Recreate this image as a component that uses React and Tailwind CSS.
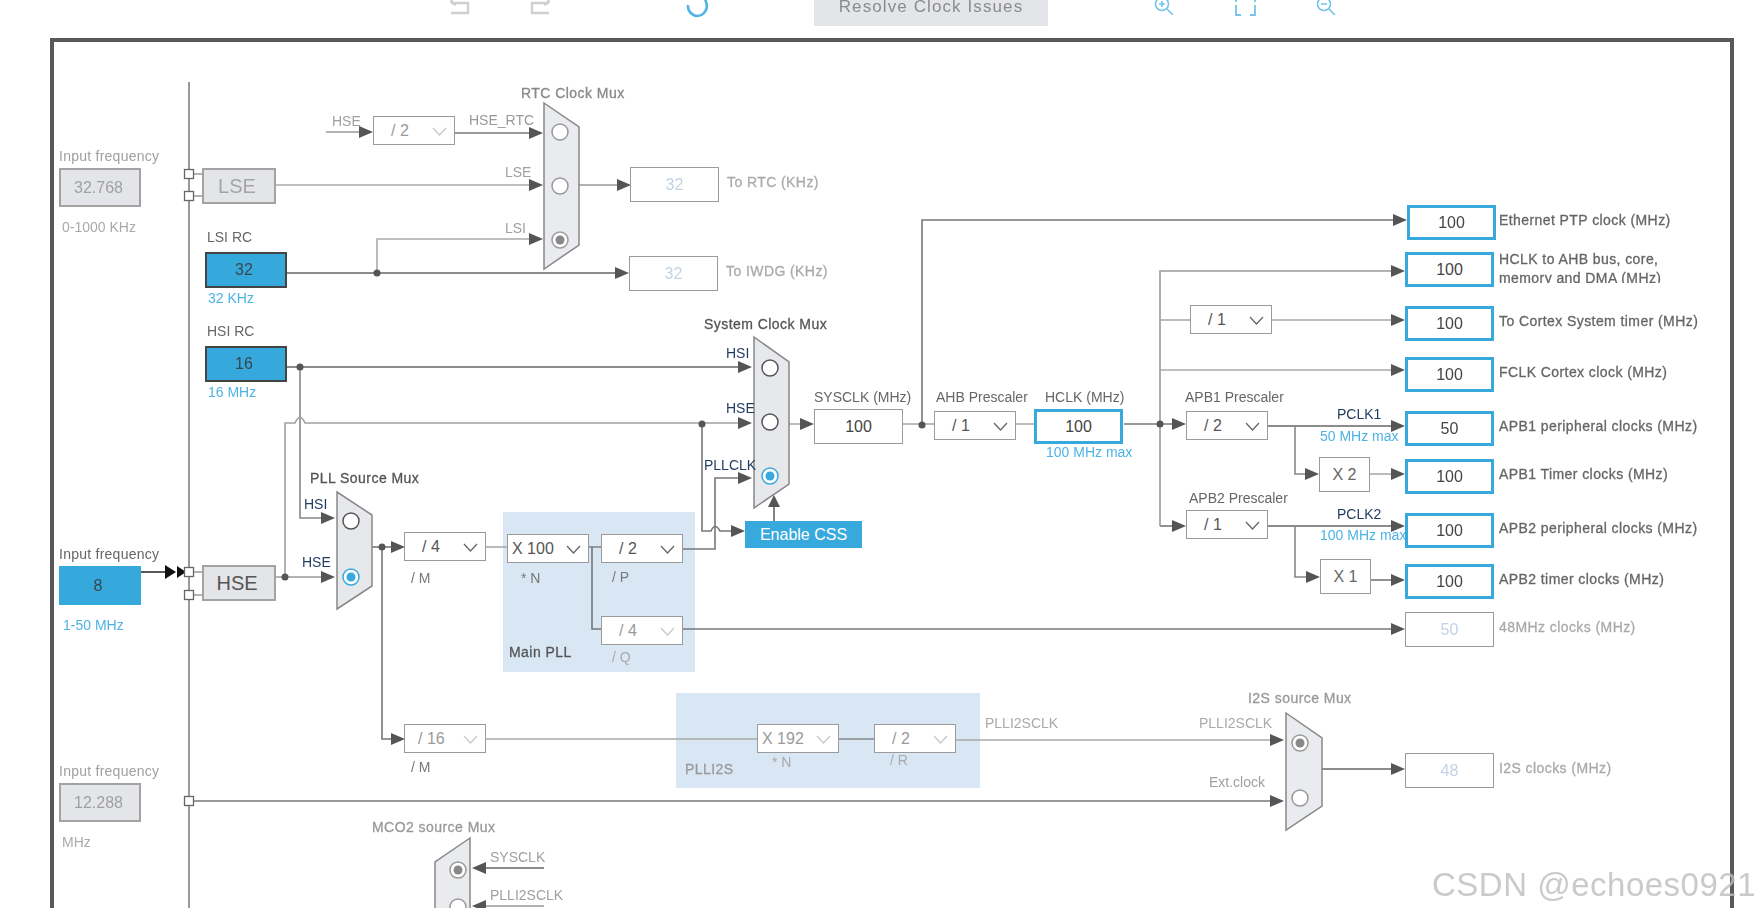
import React from "react";

const BLUE = "#38a9dd";

// wires: points in page coordinates, c = stroke colour
const wires = [
    { d: "M326 132 H362", c: "#999" },
    { d: "M455 133 H530", c: "#777" },
    { d: "M276 185 H530", c: "#aaa" },
    { d: "M287 273 H618", c: "#666" },
    { d: "M377 273 V239 H530", c: "#aaa" },
    { d: "M579 185 H620", c: "#999" },
    { d: "M287 367 H740", c: "#666" },
    { d: "M300 367 V518 H323", c: "#888" },
    { d: "M285 577 V423 H295 Q300 412 305 423 H740", c: "#a0a0a0" },
    { d: "M276 577 H323", c: "#999" },
    { d: "M702 424 V531 H711 Q715 522 720 531 H732", c: "#777" },
    { d: "M683 549 H715 V478 H740", c: "#777" },
    { d: "M774 521 V505", c: "#666" },
    { d: "M789 424 H802", c: "#aaa" },
    { d: "M903 424 H934", c: "#aaa" },
    { d: "M922 424 V220 H1394", c: "#777" },
    { d: "M1016 424 H1035", c: "#aaa" },
    { d: "M1124 424 H1174", c: "#777" },
    { d: "M1160 526 H1174", c: "#777" },
    { d: "M1160 526 V271 H1392", c: "#999" },
    { d: "M1160 320 H1190", c: "#aaa" },
    { d: "M1271 320 H1392", c: "#aaa" },
    { d: "M1160 370 H1392", c: "#aaa" },
    { d: "M1267 426 H1392", c: "#666" },
    { d: "M1295 426 V474 H1308", c: "#888" },
    { d: "M1370 474 H1392", c: "#aaa" },
    { d: "M1267 526 H1392", c: "#666" },
    { d: "M1295 526 V577 H1308", c: "#888" },
    { d: "M1370 580 H1392", c: "#777" },
    { d: "M372 547 H392", c: "#777" },
    { d: "M382 547 V739 H392", c: "#777" },
    { d: "M486 547 H507", c: "#aaa" },
    { d: "M588 547 H601", c: "#888" },
    { d: "M592 547 V629 H601", c: "#777" },
    { d: "M683 629 H1392", c: "#777" },
    { d: "M486 739 H757", c: "#a8a8a8" },
    { d: "M839 739 H874", c: "#888" },
    { d: "M956 740 H1271", c: "#a8a8a8" },
    { d: "M194 801 H1271", c: "#777" },
    { d: "M1322 769 H1392", c: "#666" },
    { d: "M544 868 H484", c: "#666" },
    { d: "M544 906 H484", c: "#999" },
    { d: "M194 174 H202 M194 196 H202 M194 572 H202 M194 595 H202", c: "#999" },
];

const arrows = [
    [373, 132], [543, 133], [543, 185], [543, 239], [631, 185], [629, 273],
    [752, 367], [752, 423], [752, 478], [745, 531], [814, 424], [1186, 424], [1186, 526],
    [1407, 220], [1405, 271], [1405, 320], [1405, 370], [1405, 426], [1405, 474], [1405, 526], [1405, 580], [1405, 629], [1405, 769],
    [1319, 474], [1320, 577], [335, 518], [335, 577], [405, 547], [405, 739], [1284, 740], [1284, 801],
];

const dots = [[377, 273], [300, 367], [285, 577], [702, 424], [382, 547], [922, 425], [1160, 424]];

const muxes = [
    { p: "544,103 579,127 579,245 544,269", c: "#e9ebee" },
    { p: "754,337 789,362 789,484 754,508", c: "#e6e8eb" },
    { p: "337,492 372,515 372,586 337,609", c: "#e6e8eb" },
    { p: "1286,713 1322,738 1322,806 1286,830", c: "#e9ebee" },
    { p: "470,838 435,862 435,920 470,920", c: "#e9ebee" },
];

const radios = [
    { x: 560, y: 132, s: "#999" }, { x: 560, y: 186, s: "#999" }, { x: 560, y: 240, on: "#888", s: "#999" },
    { x: 770, y: 368, s: "#555" }, { x: 770, y: 422, s: "#555" }, { x: 770, y: 476, on: BLUE, s: BLUE },
    { x: 351, y: 521, s: "#555" }, { x: 351, y: 577, on: BLUE, s: BLUE },
    { x: 1300, y: 743, on: "#888", s: "#999" }, { x: 1300, y: 798, s: "#999" },
    { x: 458, y: 870, on: "#888", s: "#999" }, { x: 458, y: 907, s: "#999" },
];

function Wiring() {
    return (
        <svg className="absolute left-0 top-0 w-[1758px] h-[908px]" viewBox="0 0 1758 908" fill="none">
            <path d="M189 82 V908" stroke="#777" strokeWidth="1.5" />
            {wires.map((w, i) => (
                <path key={i} d={w.d} stroke={w.c} strokeWidth="1.6" />
            ))}
            <path d="M141 572 H170" stroke="#222" strokeWidth="1.5" />
            <polygon points="165,565 176,572 165,579" fill="#111" />
            <polygon points="177,566 186,572 177,578" fill="#111" />
            <polygon points="774,495 768,507 780,507" fill="#555" />
            <polygon points="472,868 486,862 486,874" fill="#555" />
            <polygon points="472,906 486,900 486,912" fill="#555" />
            {arrows.map(([x, y], i) => (
                <polygon key={i} points={`${x},${y} ${x - 14},${y - 6} ${x - 14},${y + 6}`} fill="#555" />
            ))}
            {dots.map(([x, y], i) => (
                <circle key={i} cx={x} cy={y} r="3.5" fill="#555" />
            ))}
            {muxes.map((m, i) => (
                <polygon key={i} points={m.p} fill={m.c} stroke="#888" strokeWidth="1.5" />
            ))}
            {radios.map((r, i) => (
                <g key={i}>
                    <circle cx={r.x} cy={r.y} r="8" fill="#fff" stroke={r.s} strokeWidth="1.5" />
                    {r.on && <circle cx={r.x} cy={r.y} r="4.5" fill={r.on} />}
                </g>
            ))}
            {[[189, 174], [189, 196], [189, 572], [189, 595], [189, 801]].map(([x, y], i) => (
                <rect key={i} x={x - 4.5} y={y - 4.5} width="9" height="9" fill="#fff" stroke="#666" strokeWidth="1.3" />
            ))}
        </svg>
    );
}

function Label({ className = "", strong, children }) {
    return (
        <div className={`absolute -translate-y-1/2 whitespace-nowrap text-[14px] leading-none ${strong ? "tracking-[0.45px] [-webkit-text-stroke:0.3px]" : ""} ${className}`}>
            {children}
        </div>
    );
}

function Select({ className = "", value, muted, pad = "ml-[17px]" }) {
    return (
        <div className={`absolute flex items-center h-[29px] w-[82px] pt-[1px] bg-white border-[1.5px] border-[#9b9b9b] text-[16px] ${muted ? "text-[#9a9a9a]" : "text-[#555]"} ${className}`}>
            <span className={pad}>{value}</span>
            <svg className="ml-auto mr-[7px] w-[15px] h-[9px]" viewBox="0 0 15 9" fill="none">
                <path d="M1 1 L7.5 8 L14 1" stroke={muted ? "#c8c8c8" : "#666"} strokeWidth="1.3" />
            </svg>
        </div>
    );
}

function Out({ className = "", value, off }) {
    return (
        <div className={`flex shrink-0 items-center justify-center w-[89px] h-[35px] bg-white text-[16px] ${off ? "border-[1.5px] border-[#9b9b9b] text-[#c3d2e6]" : "border-[3px] border-[#38a9dd] text-[#444]"} ${className}`}>
            {value}
        </div>
    );
}

// an output clock: value box with its caption to the right
function OutRow({ className = "", gap = "gap-[5px]", value, off, children }) {
    return (
        <div className={`absolute flex items-center ${gap} ${className}`}>
            <Out value={value} off={off} />
            <div className={`mb-[5px] whitespace-nowrap text-[14px] leading-none tracking-[0.42px] [-webkit-text-stroke:0.3px] ${off ? "text-[#aaa]" : "text-[#666]"}`}>
                {children}
            </div>
        </div>
    );
}

function GrayBox({ className = "", children }) {
    return <div className={`flex items-center justify-center bg-[#e3e5e8] border-2 border-[#a3a3a3] ${className}`}>{children}</div>;
}

function BlueBox({ className = "", children }) {
    return <div className={`flex items-center justify-center pr-[4px] bg-[#36a9dc] text-[16px] text-[#3a4650] ${className}`}>{children}</div>;
}

function Plain({ className = "", children }) {
    return <div className={`absolute flex items-center justify-center bg-white border-[1.5px] border-[#9b9b9b] text-[16px] ${className}`}>{children}</div>;
}

function Toolbar() {
    return (
        <div className="flex items-start h-[38px] pl-[450px] overflow-hidden">
            <svg className="w-[20px] h-[15px]" viewBox="0 0 20 15" fill="none" stroke="#cfcfcf" strokeWidth="2.4">
                <path d="M3 -2 L1 2 L6 5 M1 3 H18 V13 H1" />
            </svg>
            <svg className="ml-[60px] w-[20px] h-[15px]" viewBox="0 0 20 15" fill="none" stroke="#cfcfcf" strokeWidth="2.4">
                <path d="M17 -2 L19 2 L14 5 M19 3 H2 V13 H19" />
            </svg>
            <svg className="ml-[135px] w-[24px] h-[18px]" viewBox="0 0 24 18" fill="none" stroke="#4db3e4" strokeWidth="2.6">
                <path d="M3 5 A10 10 0 0 0 12 16 A10 10 0 0 0 21 2 L20 -2" />
            </svg>
            <div className="ml-[105px] flex items-end justify-center w-[234px] h-[26px] pb-[11px] bg-[#e3e5e8] text-[#8b8b8b] text-[17px] tracking-[1.1px] leading-none">
                Resolve Clock Issues
            </div>
            <svg className="ml-[106px] w-[20px] h-[15px]" viewBox="0 0 20 15" fill="none" stroke="#74c3ea" strokeWidth="1.6">
                <circle cx="8" cy="4" r="6.5" />
                <path d="M13 9 L19 15 M8 1 V7 M5 4 H11" />
            </svg>
            <svg className="ml-[61px] w-[21px] h-[16px]" viewBox="0 0 21 16" fill="none" stroke="#74c3ea" strokeWidth="1.8">
                <path d="M1 5 V15 H6 M15 15 H20 V5 M1 -2 V2 M20 -2 V2" />
            </svg>
            <svg className="ml-[60px] w-[20px] h-[15px]" viewBox="0 0 20 15" fill="none" stroke="#74c3ea" strokeWidth="1.6">
                <circle cx="8" cy="4" r="6.5" />
                <path d="M13 9 L19 15 M5 4 H11" />
            </svg>
        </div>
    );
}

export default function App() {
    return (
        <div className="h-[915px] bg-white font-['Liberation_Sans',Arial,sans-serif] text-[#666]">
            <div className="relative h-[908px] overflow-hidden blur-[0.45px]">
                <Toolbar />
                <div className="ml-[50px] w-[1684px] h-[870px] border-x-[4px] border-t-[4px] border-[#58595b]" />

                {/* PLL regions sit under the wires */}
                <div className="absolute left-[503px] top-[512px] w-[192px] h-[160px] bg-[#d9e7f4]" />
                <div className="absolute left-[676px] top-[693px] w-[304px] h-[95px] bg-[#d9e7f4]" />

                <Wiring />

                {/* sources on the left */}
                <div className="absolute left-[59px] top-[149px] flex flex-col text-[14px] leading-none">
                    <div className="mb-[5px] tracking-[0.25px] text-[#a0a0a0]">Input frequency</div>
                    <GrayBox className="w-[82px] h-[39px] pr-[3px] text-[16px] text-[#a0a0a0]">32.768</GrayBox>
                    <div className="mt-[13px] ml-[3px] text-[#aaa]">0-1000 KHz</div>
                </div>
                <GrayBox className="absolute left-[202px] top-[168px] w-[74px] h-[36px] pr-[4px] text-[20px] text-[#a5a5a5]">LSE</GrayBox>

                <div className="absolute left-[205px] top-[230px] flex flex-col text-[14px] leading-none">
                    <div className="mb-[8px] ml-[2px] text-[#666]">LSI RC</div>
                    <BlueBox className="w-[82px] h-[36px] border-2 border-[#444]">32</BlueBox>
                    <div className="mt-[3px] ml-[3px] text-[#4db3e4]">32 KHz</div>
                </div>
                <div className="absolute left-[205px] top-[324px] flex flex-col text-[14px] leading-none">
                    <div className="mb-[8px] ml-[2px] text-[#666]">HSI RC</div>
                    <BlueBox className="w-[82px] h-[36px] border-2 border-[#444]">16</BlueBox>
                    <div className="mt-[3px] ml-[3px] text-[#4db3e4]">16 MHz</div>
                </div>

                <div className="absolute left-[59px] top-[547px] flex flex-col text-[14px] leading-none">
                    <div className="mb-[5px] tracking-[0.25px] text-[#666]">Input frequency</div>
                    <BlueBox className="w-[82px] h-[39px]">8</BlueBox>
                    <div className="mt-[13px] ml-[4px] text-[#4db3e4]">1-50 MHz</div>
                </div>
                <GrayBox className="absolute left-[202px] top-[565px] w-[74px] h-[36px] pr-[4px] text-[20px] text-[#555]">HSE</GrayBox>

                <div className="absolute left-[59px] top-[764px] flex flex-col text-[14px] leading-none">
                    <div className="mb-[5px] tracking-[0.25px] text-[#a0a0a0]">Input frequency</div>
                    <GrayBox className="w-[82px] h-[39px] pr-[3px] text-[16px] text-[#a0a0a0]">12.288</GrayBox>
                    <div className="mt-[13px] ml-[3px] text-[#aaa]">MHz</div>
                </div>

                {/* RTC section */}
                <Label strong className="left-[521px] top-[93px] text-[#888]">RTC Clock Mux</Label>
                <Label className="left-[332px] top-[121px] text-[#a0a0a0]">HSE</Label>
                <Select className="left-[373px] top-[116px]" value="/ 2" muted />
                <Label className="left-[469px] top-[120px] text-[#999]">HSE_RTC</Label>
                <Label className="left-[505px] top-[172px] text-[#a0a0a0]">LSE</Label>
                <Label className="left-[505px] top-[228px] text-[#a0a0a0]">LSI</Label>
                <OutRow className="left-[630px] top-[167px]" gap="gap-[8px]" value="32" off>To RTC (KHz)</OutRow>
                <OutRow className="left-[629px] top-[256px]" gap="gap-[8px]" value="32" off>To IWDG (KHz)</OutRow>

                {/* system clock */}
                <Label strong className="left-[704px] top-[324px] text-[#555]">System Clock Mux</Label>
                <Label className="left-[726px] top-[353px] text-[#1f3a5f]">HSI</Label>
                <Label className="left-[726px] top-[408px] text-[#1f3a5f]">HSE</Label>
                <Label className="left-[704px] top-[465px] text-[#1f3a5f]">PLLCLK</Label>
                <div className="absolute left-[745px] top-[521px] w-[117px] h-[27px] flex items-center justify-center bg-[#38a9dd] text-white text-[16px]">Enable CSS</div>

                <Label className="left-[814px] top-[397px] text-[#666]">SYSCLK (MHz)</Label>
                <Plain className="left-[814px] top-[409px] w-[89px] h-[35px] text-[#444]">100</Plain>
                <Label className="left-[936px] top-[397px] text-[#666]">AHB Prescaler</Label>
                <Select className="left-[934px] top-[411px]" value="/ 1" />
                <Label className="left-[1045px] top-[397px] text-[#666]">HCLK (MHz)</Label>
                <Out className="absolute left-[1034px] top-[409px]" value="100" />
                <Label className="left-[1046px] top-[452px] text-[#4db3e4]">100 MHz max</Label>

                {/* PLL */}
                <Label strong className="left-[310px] top-[478px] text-[#555]">PLL Source Mux</Label>
                <Label className="left-[304px] top-[504px] text-[#1f3a5f]">HSI</Label>
                <Label className="left-[302px] top-[562px] text-[#1f3a5f]">HSE</Label>
                <Select className="left-[404px] top-[532px]" value="/ 4" />
                <Label className="left-[411px] top-[578px] text-[#777]">/ M</Label>
                <Select className="left-[507px] top-[534px]" value="X 100" pad="ml-[4px]" />
                <Label className="left-[521px] top-[578px] text-[#777]">* N</Label>
                <Select className="left-[601px] top-[534px]" value="/ 2" />
                <Label className="left-[612px] top-[577px] text-[#777]">/ P</Label>
                <Select className="left-[601px] top-[616px]" value="/ 4" muted />
                <Label className="left-[612px] top-[657px] text-[#aaa]">/ Q</Label>
                <Label strong className="left-[509px] top-[652px] text-[#555]">Main PLL</Label>

                <Select className="left-[404px] top-[724px]" value="/ 16" muted pad="ml-[13px]" />
                <Label className="left-[411px] top-[767px] text-[#777]">/ M</Label>
                <Select className="left-[757px] top-[724px]" value="X 192" muted pad="ml-[4px]" />
                <Label className="left-[772px] top-[762px] text-[#aaa]">* N</Label>
                <Select className="left-[874px] top-[724px]" value="/ 2" muted />
                <Label className="left-[890px] top-[760px] text-[#aaa]">/ R</Label>
                <Label strong className="left-[685px] top-[769px] text-[#999]">PLLI2S</Label>
                <Label className="left-[985px] top-[723px] text-[#aaa]">PLLI2SCLK</Label>
                <Label className="left-[1199px] top-[723px] text-[#aaa]">PLLI2SCLK</Label>
                <Label className="left-[1209px] top-[782px] text-[#a0a0a0]">Ext.clock</Label>
                <Label strong className="left-[1248px] top-[698px] text-[#999]">I2S source Mux</Label>

                <Label strong className="left-[372px] top-[827px] text-[#999]">MCO2 source Mux</Label>
                <Label className="left-[490px] top-[857px] text-[#a0a0a0]">SYSCLK</Label>
                <Label className="left-[490px] top-[895px] text-[#a0a0a0]">PLLI2SCLK</Label>

                {/* AHB / APB branches */}
                <Select className="left-[1190px] top-[305px]" value="/ 1" />
                <Label className="left-[1185px] top-[397px] text-[#666]">APB1 Prescaler</Label>
                <Select className="left-[1186px] top-[411px]" value="/ 2" />
                <Label className="left-[1337px] top-[414px] text-[#1f3a5f]">PCLK1</Label>
                <Label className="left-[1320px] top-[436px] text-[#4db3e4]">50 MHz max</Label>
                <Plain className="left-[1319px] top-[457px] w-[51px] h-[35px] text-[#666]">X 2</Plain>
                <Label className="left-[1189px] top-[498px] text-[#666]">APB2 Prescaler</Label>
                <Select className="left-[1186px] top-[510px]" value="/ 1" />
                <Label className="left-[1337px] top-[514px] text-[#1f3a5f]">PCLK2</Label>
                <Label className="left-[1320px] top-[535px] text-[#4db3e4]">100 MHz max</Label>
                <Plain className="left-[1320px] top-[559px] w-[51px] h-[35px] text-[#666]">X 1</Plain>

                {/* output clocks */}
                <OutRow className="left-[1407px] top-[205px]" gap="gap-[3px]" value="100">Ethernet PTP clock (MHz)</OutRow>
                <div className="absolute left-[1405px] top-[252px] flex items-start gap-[5px]">
                    <Out value="100" />
                    <div className="-mt-[2px] h-[33px] overflow-hidden whitespace-nowrap text-[14px] tracking-[0.42px] [-webkit-text-stroke:0.3px] leading-[18.5px] text-[#666]">
                        HCLK to AHB bus, core,<br />memory and DMA (MHz)
                    </div>
                </div>
                <OutRow className="left-[1405px] top-[306px]" value="100">To Cortex System timer (MHz)</OutRow>
                <OutRow className="left-[1405px] top-[357px]" value="100">FCLK Cortex clock (MHz)</OutRow>
                <OutRow className="left-[1405px] top-[411px]" value="50">APB1 peripheral clocks (MHz)</OutRow>
                <OutRow className="left-[1405px] top-[459px]" value="100">APB1 Timer clocks (MHz)</OutRow>
                <OutRow className="left-[1405px] top-[513px]" value="100">APB2 peripheral clocks (MHz)</OutRow>
                <OutRow className="left-[1405px] top-[564px]" value="100">APB2 timer clocks (MHz)</OutRow>
                <OutRow className="left-[1405px] top-[612px]" value="50" off>48MHz clocks (MHz)</OutRow>
                <OutRow className="left-[1405px] top-[753px]" value="48" off>I2S clocks (MHz)</OutRow>

                {/* watermark */}
                <div className="absolute left-[1432px] top-[866px] whitespace-nowrap text-[33px] leading-[38px] tracking-[0.5px] text-[#bdbdbd]/80">CSDN @echoes0921</div>
            </div>
        </div>
    );
}
